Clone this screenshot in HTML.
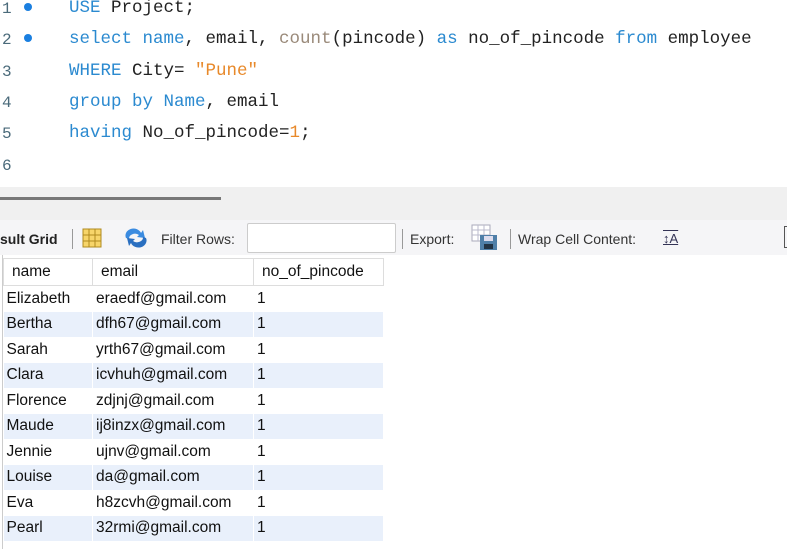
<!DOCTYPE html>
<html><head><style>
body{margin:0;width:787px;height:549px;background:#fff;position:relative;overflow:hidden;font-family:"Liberation Sans",sans-serif}
.code{position:absolute;left:0;top:0;font-family:"Liberation Mono",monospace;font-size:17.5px}
.ln{position:absolute;left:2px;color:#4a6a7a;font-size:16px}
.dot{position:absolute;left:24px;width:8px;height:8px;border-radius:50%;background:#1a7fe0}
.l{position:absolute;left:69px;white-space:pre;color:#222}
.k{color:#2b8ad0}.f{color:#9a8a7a}.s{color:#e8892a}
.gray{position:absolute;left:0;top:187px;width:787px;height:33px;background:#f0f0f0}
.sb{position:absolute;left:0;top:197px;width:221px;height:3px;background:#777}
.tb{position:absolute;left:0;top:220px;width:787px;height:35px;background:#f5f5f7;font-size:14px;color:#333}
.tb span{position:absolute;top:11px}
.sep{position:absolute;top:9px;width:1px;height:20px;background:#999}
table{position:absolute;left:3px;top:258px;border-collapse:collapse;font-size:15.5px;color:#111}
td{height:25.5px;padding:0 0 0 3px;border-right:1px solid #fff;vertical-align:middle;white-space:nowrap}
tr.h td{height:26px;border:1px solid #ddd;background:#fff;padding-left:8px}
tr:nth-child(odd):not(.h) td{background:#e9f0fb}
</style></head><body>
<div class="code">
<div class="ln" style="top:0px">1</div><div class="dot" style="top:3px"></div>
<div class="ln" style="top:31px">2</div><div class="dot" style="top:34px"></div>
<div class="ln" style="top:63px">3</div>
<div class="ln" style="top:94px">4</div>
<div class="ln" style="top:125px">5</div>
<div class="ln" style="top:157px">6</div>
<div class="l" style="top:-2px"><span class="k">USE</span> Project;</div>
<div class="l" style="top:29px"><span class="k">select name</span>, email, <span class="f">count</span>(pincode) <span class="k">as</span> no_of_pincode <span class="k">from</span> employee</div>
<div class="l" style="top:61px"><span class="k">WHERE</span> City= <span class="s">"Pune"</span></div>
<div class="l" style="top:92px"><span class="k">group by Name</span>, email</div>
<div class="l" style="top:123px"><span class="k">having</span> No_of_pincode=<span class="s">1</span>;</div>
</div>
<div class="gray"></div><div class="sb"></div>
<div class="tb">
<span style="left:0;font-weight:bold;color:#222">sult Grid</span>
<div class="sep" style="left:72px"></div>
<svg style="position:absolute;left:82px;top:8px" width="20" height="20"><rect x="1" y="1" width="18" height="18" fill="#f7d56a" stroke="#b08a20"/><line x1="7" y1="1" x2="7" y2="19" stroke="#b08a20"/><line x1="13" y1="1" x2="13" y2="19" stroke="#b08a20"/><line x1="1" y1="7" x2="19" y2="7" stroke="#b08a20"/><line x1="1" y1="13" x2="19" y2="13" stroke="#b08a20"/></svg>
<svg style="position:absolute;left:123px;top:8px" width="26" height="20"><path d="M3 10 A8 7 0 0 1 18 5 L20 2 L22 10 L14 9 L16 7 A6 5 0 0 0 6 11Z" fill="#3a8be0"/><path d="M23 10 A8 7 0 0 1 8 15 L6 18 L4 10 L12 11 L10 13 A6 5 0 0 0 20 9Z" fill="#2a6fc0"/></svg>
<span style="left:161px">Filter Rows:</span>
<div style="position:absolute;left:247px;top:3px;width:147px;height:28px;background:#fff;border:1px solid #ccc;border-radius:2px"></div>
<div class="sep" style="left:402px"></div>
<span style="left:410px">Export:</span>
<svg style="position:absolute;left:471px;top:4px" width="28" height="27"><rect x="1" y="1" width="18" height="16" fill="#fff" stroke="#aab"/><path d="M1 6H19M1 11H19M7 1V17M13 1V17" stroke="#bbc"/><rect x="9" y="11" width="17" height="15" fill="#4f7fa8"/><rect x="13" y="12" width="9" height="5" fill="#dde"/><rect x="13" y="20" width="9" height="5" fill="#234"/></svg>
<div class="sep" style="left:510px"></div>
<span style="left:518px">Wrap Cell Content:</span>
<span style="left:663px;color:#335;font-size:13px;text-decoration:underline overline">↕A</span>
<div style="position:absolute;left:784px;top:6px;width:3px;height:20px;border:1px solid #555;border-right:none"></div>
</div>
<div style="position:absolute;left:2px;top:255px;width:1px;height:294px;background:#ccc"></div>
<table>
<tr class="h"><td style="width:80px">name</td><td style="width:152px">email</td><td style="width:121px">no_of_pincode</td></tr>
<tr><td>Elizabeth</td><td>eraedf@gmail.com</td><td>1</td></tr>
<tr><td>Bertha</td><td>dfh67@gmail.com</td><td>1</td></tr>
<tr><td>Sarah</td><td>yrth67@gmail.com</td><td>1</td></tr>
<tr><td>Clara</td><td>icvhuh@gmail.com</td><td>1</td></tr>
<tr><td>Florence</td><td>zdjnj@gmail.com</td><td>1</td></tr>
<tr><td>Maude</td><td>ij8inzx@gmail.com</td><td>1</td></tr>
<tr><td>Jennie</td><td>ujnv@gmail.com</td><td>1</td></tr>
<tr><td>Louise</td><td>da@gmail.com</td><td>1</td></tr>
<tr><td>Eva</td><td>h8zcvh@gmail.com</td><td>1</td></tr>
<tr><td>Pearl</td><td>32rmi@gmail.com</td><td>1</td></tr>
</table>
</body></html>
